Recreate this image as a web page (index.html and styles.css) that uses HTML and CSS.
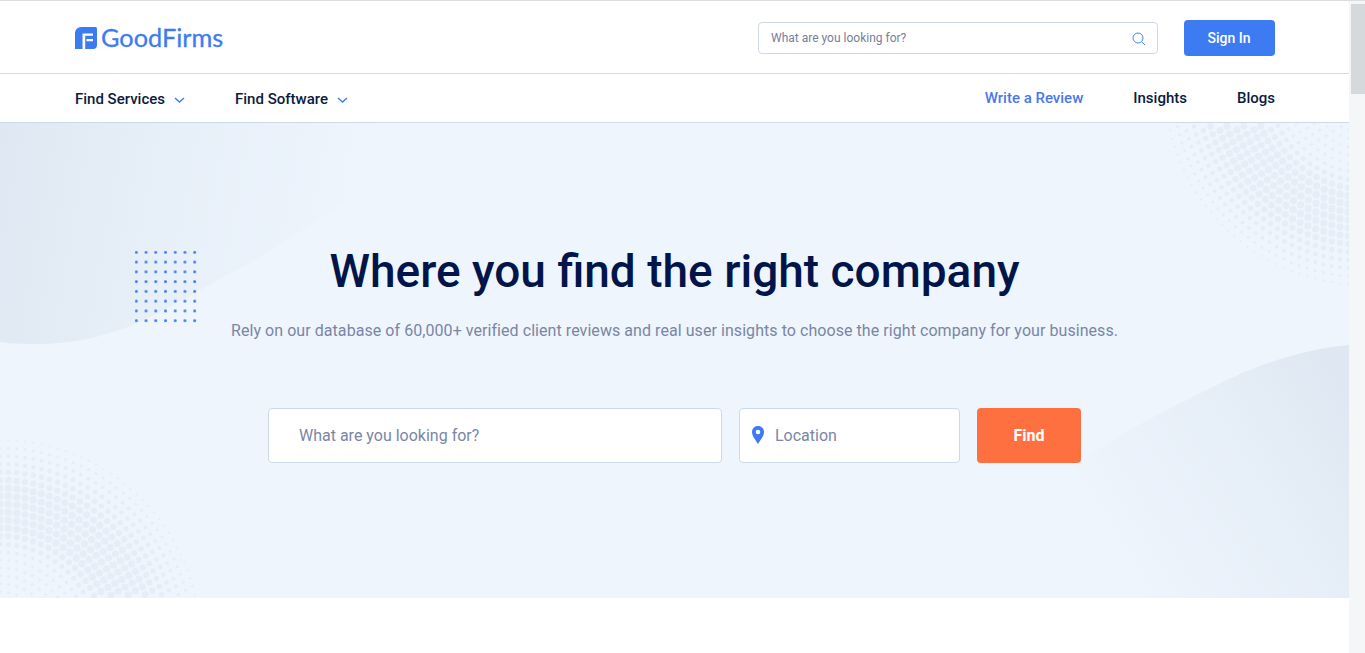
FILE: index.html
```html
<!DOCTYPE html>
<html lang="en">
<head>
  <meta charset="UTF-8">
  <meta name="viewport" content="width=device-width, initial-scale=1.0">
  <title>GoodFirms</title>
  <link rel="stylesheet" href="styles.css">
</head>
<body>
  <div class="page">
    <div class="content">
      <header class="topbar">
        <div class="wrap topbar-row">
          <a class="logo" href="#">
            <svg class="logo-mark" viewBox="0 0 22 22" width="22" height="22">
              <path fill="#3d7bf3" d="M6 0H20.500A1.500 1.500 0 0 1 22 1.500V18A4 4 0 0 1 18 22H0V6A6 6 0 0 1 6 0Z"/>
              <path fill="#fff" d="M7.500 6.500H18V8.800H10.200V22H7.500ZM11.500 12H18V14.300H11.500Z"/>
            </svg>
            <span class="logo-text">GoodFirms</span>
          </a>
          <div class="topbar-right">
            <form class="mini-search">
              <input class="mini-input" type="text" placeholder="What are you looking for?">
              <svg class="mini-icon" viewBox="0 0 14 14" width="14" height="14">
                <circle cx="6" cy="6" r="5" fill="none" stroke="#4a86ee" stroke-width="1"/>
                <path d="M9.600 9.600L13 13" stroke="#4a86ee" stroke-width="1" fill="none"/>
              </svg>
            </form>
            <a class="signin" href="#">Sign In</a>
          </div>
        </div>
      </header>

      <nav class="mainnav">
        <div class="wrap nav-row">
          <div class="nav-left">
            <a class="nav-link" href="#">Find Services
              <svg class="chev" viewBox="0 0 11 6" width="11" height="6"><path d="M1 1L5.500 5L10 1" fill="none" stroke="#3d7bf3" stroke-width="1.400"/></svg>
            </a>
            <a class="nav-link" href="#">Find Software
              <svg class="chev" viewBox="0 0 11 6" width="11" height="6"><path d="M1 1L5.500 5L10 1" fill="none" stroke="#3d7bf3" stroke-width="1.400"/></svg>
            </a>
          </div>
          <div class="nav-right">
            <a class="nav-link nav-link-blue" href="#">Write a Review</a>
            <a class="nav-link" href="#">Insights</a>
            <a class="nav-link" href="#">Blogs</a>
          </div>
        </div>
      </nav>

      <section class="hero">
        <svg class="hero-bg" id="heroBg" viewBox="0 0 1349 475" width="1349" height="475">
          <defs>
            <linearGradient id="waveLeft" x1="0" y1="0" x2="1" y2="0.100">
              <stop offset="0" stop-color="#dfe8f2"/>
              <stop offset="0.450" stop-color="#e7eff8"/>
              <stop offset="0.950" stop-color="#eef5fd"/>
            </linearGradient>
            <linearGradient id="waveRight" x1="1" y1="0.200" x2="0.150" y2="0.600">
              <stop offset="0" stop-color="#dfe8f2"/>
              <stop offset="0.400" stop-color="#e6eef7"/>
              <stop offset="1" stop-color="#eef5fd"/>
            </linearGradient>
            <pattern id="blueDots" x="134.800" y="127.800" width="9.730" height="9.770" patternUnits="userSpaceOnUse">
              <circle cx="1.500" cy="1.500" r="1.500" fill="#3d7bf3"/>
            </pattern>
          </defs>
          <path fill="url(#waveLeft)" d="M0 219C12 221 25 221 37 221C75 221 105 213 133 202C160 190 180 178 200 167C225 153 245 143 267 130C290 116 312 101 333 87C350 75 368 60 400 35V0H0Z"/>
          <path fill="url(#waveRight)" d="M1349 222C1300 226 1250 245 1217 262C1180 280 1130 305 1100 325C1070 345 1040 375 1020 400V475H1349Z"/>
          <g id="halftone" fill="#e5edf7"></g>
          <rect x="134.800" y="127.800" width="63" height="73" fill="url(#blueDots)"/>
        </svg>

        <div class="hero-body">
          <h1 class="hero-title">Where you find the right company</h1>
          <p class="hero-sub">Rely on our database of 60,000+ verified client reviews and real user insights to choose the right company for your business.</p>
          <form class="finder">
            <input class="finder-input finder-what" type="text" placeholder="What are you looking for?">
            <div class="finder-input finder-where">
              <svg class="pin" viewBox="0 0 12 18" width="12" height="18">
                <path fill="#3d7bf3" fill-rule="evenodd" d="M6 0C2.700 0 0 2.600 0 5.900C0 10 4 14.500 6 18C8 14.500 12 10 12 5.900C12 2.600 9.300 0 6 0ZM6 3.700A2.300 2.300 0 1 1 6 8.300A2.300 2.300 0 0 1 6 3.700Z"/>
              </svg>
              <input class="where-input" type="text" placeholder="Location">
            </div>
            <button class="find-btn" type="button">Find</button>
          </form>
        </div>
      </section>
    </div>
    <div class="scrollbar"><div class="scrollbar-thumb"></div></div>
  </div>
  <script src="script.js"></script>
</body>
</html>
```

FILE: styles.css
```css
* { box-sizing: border-box; }
html, body { margin: 0; height: 100%; overflow: hidden; }
body { font-family: Roboto, Arial, sans-serif; background-color: #fff; color: #0b1a3f; }
a { text-decoration: none; color: inherit; }

.page { display: flex; height: 653px; border-top: 1px solid #ddd; }
.content { flex: 1; min-width: 0; }
.scrollbar { width: 16px; background-color: #f5f6f8; padding: 3px 0 0 2px; }
.scrollbar-thumb { height: 90px; background-color: #d6d9dc; }

.wrap { width: 1200px; margin-left: 75px; }

.topbar { height: 73px; border-bottom: 1px solid #d3dce6; }
.topbar-row { display: flex; justify-content: space-between; align-items: center; height: 72px; padding-top: 2px; }
.logo { display: flex; align-items: center; gap: 4px; }
.logo-text { font-family: Lato, sans-serif; font-size: 25.300px; line-height: 30px; color: #3d7bf3; margin-top: -2px; -webkit-text-stroke: 0.3px #3d7bf3; }
.topbar-right { display: flex; align-items: center; gap: 26px; }
.mini-search { display: flex; align-items: center; width: 400px; height: 32px; background-color: #fff; border: 1px solid #ccd9e8; border-radius: 4px; padding: 0 11px 0 12px; }
.mini-input { flex: 1; min-width: 0; border: none; outline: none; padding: 0; font-family: Roboto, sans-serif; font-size: 12px; }
.mini-input::placeholder { color: #77809a; opacity: 1; }
.mini-icon { margin-top: 2px; }
.signin { display: flex; align-items: center; justify-content: center; width: 91px; height: 36px; background-color: #3d7bf3; border-radius: 4px; color: #fff; font-size: 14px; font-weight: 500; padding-right: 1px; }

.mainnav { height: 49px; border-bottom: 1px solid #ccd9e8; }
.nav-row { display: flex; justify-content: space-between; align-items: center; height: 48px; }
.nav-left { display: flex; gap: 50px; padding-top: 2px; }
.nav-right { display: flex; gap: 50px; }
.nav-link { display: flex; align-items: center; gap: 9px; font-size: 15px; font-weight: 500; color: #0b1a3f; }
.nav-link-blue { color: #4a78ea; }
.chev { margin-top: 1px; }

.hero { position: relative; height: 475px; background-color: #eef5fd; overflow: hidden; }
.hero-bg { position: absolute; top: 0; left: 0; }
.hero-body { position: relative; display: flex; flex-direction: column; align-items: center; padding-top: 118px; }
.hero-title { margin: 0; font-size: 46px; line-height: 60px; font-weight: 500; color: #02154a; }
.hero-sub { margin: 18px 0 0; font-size: 16px; line-height: 24px; color: #7a86a4; letter-spacing: 0.06px; }
.finder { display: flex; gap: 17px; margin-top: 65px; }
.finder-input { height: 55px; background-color: #fff; border: 1px solid #ccd9e8; border-radius: 4px; font-family: Roboto, sans-serif; font-size: 16px; }
.finder-what { width: 454px; padding: 0 30px; outline: none; }
.finder-what::placeholder, .where-input::placeholder { color: #7a86a4; opacity: 1; }
.finder-where { display: flex; align-items: center; gap: 11px; width: 221px; padding-left: 12px; }
.pin { flex: none; margin-top: -1px; }
.where-input { flex: 1; min-width: 0; border: none; outline: none; padding: 0; font-family: Roboto, sans-serif; font-size: 16px; }
.find-btn { width: 104px; height: 55px; background-color: #ff7040; color: #fff; border: none; border-radius: 4px; font-family: Roboto, sans-serif; font-size: 16px; font-weight: 700; cursor: pointer; }
```

FILE: script.js
```js
// halftone corners of the hero, dots on rings around a center point
const group = document.getElementById('halftone');
const ns = 'http://www.w3.org/2000/svg';

function dotSize(d) {
  if (d < 110) return 1.6 + (d - 85) / 25 * 2;
  if (d < 150) return 3.6;
  return Math.max(0.8, 3.6 - (d - 150) / 55 * 2.8);
}

function addStar(x, y) {
  const r = 2.6;
  const q = 0.7;
  const star = document.createElementNS(ns, 'path');
  star.setAttribute('d', `M${x} ${y - r}L${x + q} ${y - q}L${x + r} ${y}L${x + q} ${y + q}L${x} ${y + r}L${x - q} ${y + q}L${x - r} ${y}L${x - q} ${y - q}Z`);
  group.appendChild(star);
}

function addDot(x, y, r) {
  const dot = document.createElementNS(ns, 'circle');
  dot.setAttribute('cx', x);
  dot.setAttribute('cy', y);
  dot.setAttribute('r', r.toFixed(1));
  group.appendChild(dot);
}

function halftone(cx, cy) {
  for (let d = 24; d <= 205; d += 8) {
    const count = Math.round(2 * Math.PI * d / 8.4);
    for (let i = 0; i < count; i++) {
      const a = (i + (d % 16 ? 0.5 : 0)) / count * 2 * Math.PI;
      const x = +(cx + Math.cos(a) * d).toFixed(1);
      const y = +(cy + Math.sin(a) * d).toFixed(1);
      if (x < -5 || x > 1349 || y < 0 || y > 475) continue;
      if (d < 85) addStar(x, y);
      else addDot(x, y, dotSize(d));
    }
  }
}

halftone(0, 517);
halftone(1365, -38);
```
